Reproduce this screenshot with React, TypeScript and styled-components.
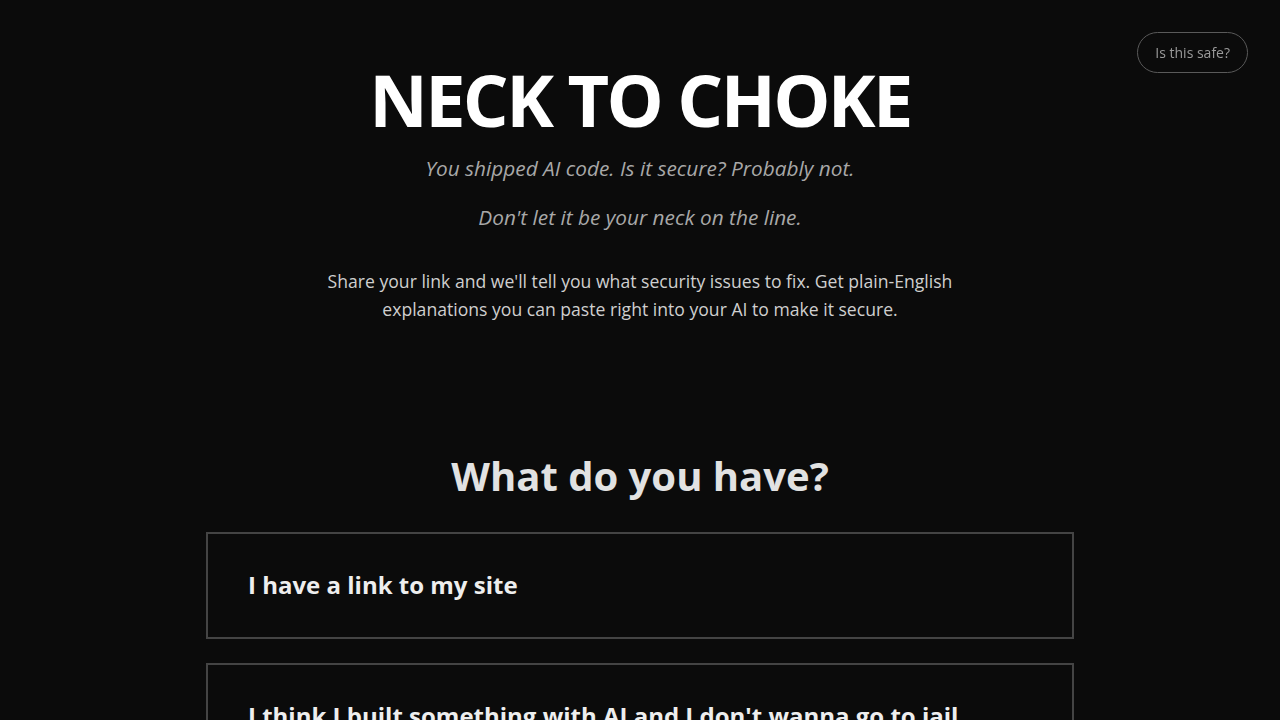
import styled, { createGlobalStyle } from 'styled-components';

const GlobalStyle = createGlobalStyle`
  html, body {
    margin: 0;
    padding: 0;
    background: #0b0b0b;
    color: #e6e6e6;
    font-family: 'Open Sans', 'Noto Sans', sans-serif;
  }
`;

const options = [
  'I have a link to my site',
  "I think I built something with AI and I don't wanna go to jail",
];

export default function App() {
  return (
    <Page>
      <GlobalStyle />
      <SafeButton>Is this safe?</SafeButton>

      <Hero>
        <Title>NECK TO CHOKE</Title>
        <Tagline>You shipped AI code. Is it secure? Probably not.</Tagline>
        <Tagline>Don't let it be your neck on the line.</Tagline>
        <Intro>
          Share your link and we'll tell you what security issues to fix. Get plain-English
          explanations you can paste right into your AI to make it secure.
        </Intro>
      </Hero>

      <Choices>
        <Heading>What do you have?</Heading>
        {options.map((label) => (
          <Card key={label}>{label}</Card>
        ))}
      </Choices>
    </Page>
  );
}

const Page = styled.div`
  min-height: 100vh;
  display: flex;
  flex-direction: column;
  align-items: center;
  padding: 56px 24px 48px;
  box-sizing: border-box;
`;

const SafeButton = styled.button`
  position: fixed;
  top: 32px;
  right: 32px;
  height: 41px;
  padding: 0 17px;
  background: transparent;
  border: 1px solid #5a5a5a;
  border-radius: 999px;
  color: #9a9a9a;
  font-family: 'Open Sans', sans-serif;
  font-size: 14px;
  cursor: pointer;
`;

const Hero = styled.header`
  display: flex;
  flex-direction: column;
  align-items: center;
  text-align: center;
`;

const Title = styled.h1`
  margin: 0;
  font-size: 72px;
  font-weight: 700;
  line-height: 1.2;
  letter-spacing: -2.6px;
  color: #ffffff;
`;

const Tagline = styled.p`
  margin: 11px 0 0;
  font-size: 20.8px;
  font-style: italic;
  line-height: 1.5;
  color: #a8a8a8;

  & + & {
    margin-top: 17px;
  }
`;

const Intro = styled.p`
  margin: 34px 0 0;
  max-width: 640px;
  font-size: 17.6px;
  line-height: 28px;
  color: #cfcfcf;
`;

const Choices = styled.section`
  width: 868px;
  margin-top: 125px;
  display: flex;
  flex-direction: column;
  gap: 24px;
`;

const Heading = styled.h2`
  margin: 0 0 5px;
  text-align: center;
  font-size: 40px;
  font-weight: 700;
  color: #e2e2e2;
`;

const Card = styled.button`
  display: block;
  width: 100%;
  padding: 33.5px 40px;
  background: transparent;
  border: 2px solid #444444;
  text-align: left;
  color: #eeeeee;
  font-family: 'Open Sans', sans-serif;
  font-size: 24px;
  font-weight: 700;
  line-height: 1.5;
  cursor: pointer;
`;
